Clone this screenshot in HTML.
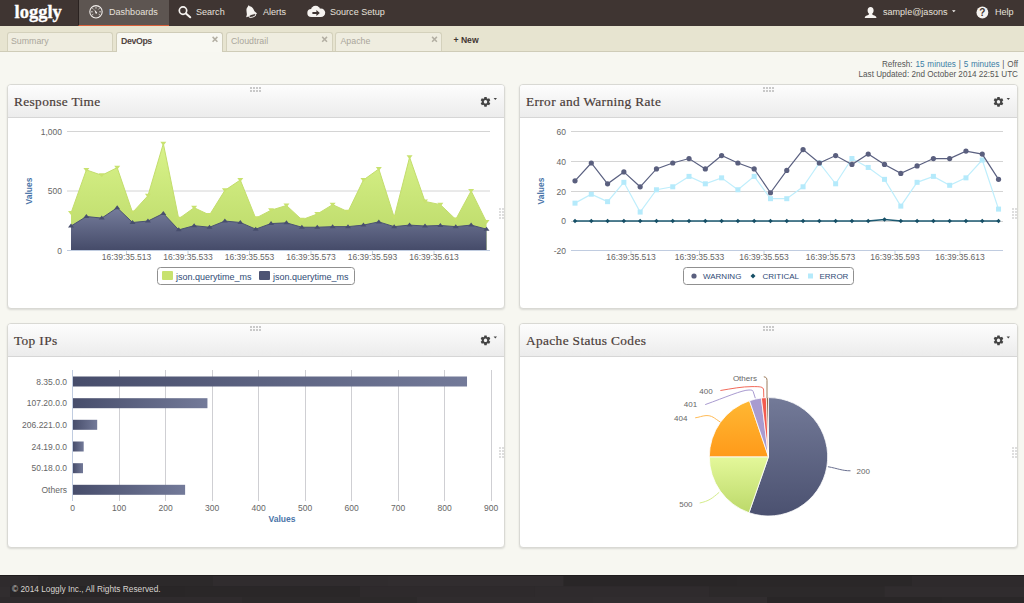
<!DOCTYPE html>
<html><head><meta charset="utf-8"><title>Loggly</title>
<style>
*{box-sizing:border-box;margin:0;padding:0}
html,body{width:1024px;height:603px;overflow:hidden}
body{background:#f7f7f1;font-family:"Liberation Sans",sans-serif;position:relative;color:#444}
#nav{position:absolute;left:0;top:0;width:1024px;height:26px;background:#3f3532}
#logo{position:absolute;left:14.5px;top:2px;font-family:"Liberation Serif",serif;font-weight:bold;font-size:18.5px;color:#fff;letter-spacing:0;-webkit-text-stroke:0.35px #fff}
.navact{position:absolute;left:78px;top:0;width:91px;height:26px;background:#5d5551;border-bottom:1px solid #d9603a;border-left:1px solid #2a2220}
.nt{position:absolute;top:6.5px;font-size:9.05px;color:#e6e1dc;white-space:nowrap}
#tabs{position:absolute;left:0;top:26px;width:1024px;height:26px;background:#e7e4d0;border-bottom:1px solid #cfccb8}
.tab{position:absolute;top:6px;height:19px;width:106px;border:1px solid #d4d1bc;border-bottom:none;border-radius:3px 3px 0 0;background:#efede0;font-size:8.8px;color:#aaa69b;padding:3px 0 0 3px}
.tab.act{background:#f8f8f2;color:#50443f;font-weight:bold;height:20px;border-color:#cfccb8}
.tab .x{position:absolute;right:4px;top:2px;font-size:9px;font-weight:bold;color:#b5b1a6}
.panel{position:absolute;width:498px;height:225px;background:#fff;border:1px solid #d9d9d4;border-radius:4px;box-shadow:0 1px 2px rgba(0,0,0,0.12)}
.ph{position:absolute;left:0;top:0;right:0;height:33px;border-bottom:1px solid #d6d6d6;border-radius:3px 3px 0 0;background:linear-gradient(#fdfdfd,#ececec)}
.pt{position:absolute;left:6px;top:8.5px;font-family:"Liberation Serif",serif;font-size:13.35px;color:#4a3c38;white-space:nowrap;letter-spacing:0.36px;-webkit-text-stroke:0.2px #4a3c38}
#foot{position:absolute;left:0;top:575px;width:1024px;height:28px;background:#2b2829}
#foot span{position:absolute;left:12px;top:9px;font-size:7.5px;color:#d8d4d0}
#refresh{position:absolute;right:6px;top:59.5px;text-align:right;font-size:8.15px;line-height:10px;color:#555}
#refresh b{font-weight:normal;color:#3a7ca5}
svg text.ax{font-family:"Liberation Sans",sans-serif;font-size:8.5px;fill:#666}
svg text.ttl{font-family:"Liberation Sans",sans-serif;font-size:8.5px;font-weight:bold;fill:#4a74a8}
svg text.lg{font-family:"Liberation Sans",sans-serif;font-size:9px;fill:#2f4a75}
svg text.pl{font-family:"Liberation Sans",sans-serif;font-size:8px;fill:#666}
</style></head><body>
<div id="nav">
  <div id="logo">loggly</div>
  <div class="navact"></div>
  <div class="nt" style="left:109px">Dashboards</div>
  <div class="nt" style="left:196px">Search</div>
  <div class="nt" style="left:263px">Alerts</div>
  <div class="nt" style="left:330px">Source Setup</div>
  <div class="nt" style="left:883px">sample@jasons</div>
  <div class="nt" style="left:995px">Help</div>
</div>
<div id="tabs">
  <div class="tab" style="left:7px">Summary</div>
  <div class="tab act" style="left:116px;width:107px"><span style="letter-spacing:-0.4px;position:relative;left:1px">DevOps</span></div>
  <div class="tab" style="left:226px;width:107px"><span style="position:relative;left:1px">Cloudtrail</span></div>
  <div class="tab" style="left:335px;width:107px"><span style="position:relative;left:1.5px">Apache</span></div>
  <div style="position:absolute;left:453.5px;top:8.5px;font-size:8.6px;font-weight:bold;color:#3f3632">+ New</div>
</div>
<div id="refresh"><span style="word-spacing:0.6px">Refresh: <b>15 minutes</b> | <b>5 minutes</b> | Off</span><br>Last Updated: 2nd October 2014 22:51 UTC</div>

<div class="panel" style="left:7px;top:84px"><div class="ph"><div class="pt">Response Time</div></div></div>
<div class="panel" style="left:519px;top:84px;width:499px"><div class="ph"><div class="pt">Error and Warning Rate</div></div></div>
<div class="panel" style="left:7px;top:323px"><div class="ph"><div class="pt">Top IPs</div></div></div>
<div class="panel" style="left:519px;top:323px;width:499px"><div class="ph"><div class="pt">Apache Status Codes</div></div></div>

<div id="foot"></div>

<svg id="ov" width="1024" height="603" viewBox="0 0 1024 603" style="position:absolute;left:0;top:0">
<defs>
<linearGradient id="gGreen" x1="0" y1="0" x2="0" y2="1"><stop offset="0" stop-color="#d9f38a"/><stop offset="1" stop-color="#bad867"/></linearGradient>
<linearGradient id="gDark" x1="0" y1="0" x2="0" y2="1"><stop offset="0" stop-color="#767d9c"/><stop offset="1" stop-color="#454b69"/></linearGradient>
<linearGradient id="gBar" x1="0" y1="0" x2="1" y2="0" gradientUnits="objectBoundingBox"><stop offset="0" stop-color="#474d6b"/><stop offset="1" stop-color="#737a99"/></linearGradient>
<linearGradient id="pSlate" x1="0" y1="0" x2="0" y2="1"><stop offset="0" stop-color="#737a98"/><stop offset="1" stop-color="#4b5170"/></linearGradient>
<linearGradient id="pGreen" x1="0" y1="0" x2="0" y2="1"><stop offset="0" stop-color="#e4f89a"/><stop offset="1" stop-color="#bcd96a"/></linearGradient>
<linearGradient id="pOrange" x1="0" y1="0" x2="0" y2="1"><stop offset="0" stop-color="#ffb833"/><stop offset="1" stop-color="#ff9a1a"/></linearGradient>
</defs>
<g id="rt">
<line x1="67" x2="490" y1="131.5" y2="131.5" stroke="#d4d4d4" stroke-width="1"/>
<line x1="67" x2="490" y1="191" y2="191" stroke="#d4d4d4" stroke-width="1"/>
<line x1="67" x2="490" y1="250.5" y2="250.5" stroke="#d4d4d4" stroke-width="1"/>
<path d="M71,250.3 L71,213.08 L86.39,169.92 L101.78,175.27 L117.17,167.66 L132.56,212.49 L147.95,195.72 L163.34,143.65 L178.73,218.79 L194.12,207.73 L209.51,214.99 L224.9,190.37 L240.29,180.03 L255.68,218.2 L271.07,210.23 L286.46,205.47 L301.85,219.74 L317.24,214.04 L332.63,204.64 L348.02,211.78 L363.41,180.03 L378.8,168.97 L394.19,217.25 L409.58,157.32 L424.97,201.43 L440.36,204.64 L455.75,219.39 L471.14,190.97 L486.53,222 L486.53,250.3 Z" fill="url(#gGreen)"/>
<path d="M71,213.08 L86.39,169.92 L101.78,175.27 L117.17,167.66 L132.56,212.49 L147.95,195.72 L163.34,143.65 L178.73,218.79 L194.12,207.73 L209.51,214.99 L224.9,190.37 L240.29,180.03 L255.68,218.2 L271.07,210.23 L286.46,205.47 L301.85,219.74 L317.24,214.04 L332.63,204.64 L348.02,211.78 L363.41,180.03 L378.8,168.97 L394.19,217.25 L409.58,157.32 L424.97,201.43 L440.36,204.64 L455.75,219.39 L471.14,190.97 L486.53,222" fill="none" stroke="#c3dd6c" stroke-width="1"/>
<path d="M71,211.08 l3,0 l-3,4 l-3,-4z" fill="#c8e26f"/>
<path d="M86.39,167.92 l3,0 l-3,4 l-3,-4z" fill="#c8e26f"/>
<path d="M101.78,173.27 l3,0 l-3,4 l-3,-4z" fill="#c8e26f"/>
<path d="M117.17,165.66 l3,0 l-3,4 l-3,-4z" fill="#c8e26f"/>
<path d="M132.56,210.49 l3,0 l-3,4 l-3,-4z" fill="#c8e26f"/>
<path d="M147.95,193.72 l3,0 l-3,4 l-3,-4z" fill="#c8e26f"/>
<path d="M163.34,141.65 l3,0 l-3,4 l-3,-4z" fill="#c8e26f"/>
<path d="M178.73,216.79 l3,0 l-3,4 l-3,-4z" fill="#c8e26f"/>
<path d="M194.12,205.73 l3,0 l-3,4 l-3,-4z" fill="#c8e26f"/>
<path d="M209.51,212.99 l3,0 l-3,4 l-3,-4z" fill="#c8e26f"/>
<path d="M224.9,188.37 l3,0 l-3,4 l-3,-4z" fill="#c8e26f"/>
<path d="M240.29,178.03 l3,0 l-3,4 l-3,-4z" fill="#c8e26f"/>
<path d="M255.68,216.2 l3,0 l-3,4 l-3,-4z" fill="#c8e26f"/>
<path d="M271.07,208.23 l3,0 l-3,4 l-3,-4z" fill="#c8e26f"/>
<path d="M286.46,203.47 l3,0 l-3,4 l-3,-4z" fill="#c8e26f"/>
<path d="M301.85,217.74 l3,0 l-3,4 l-3,-4z" fill="#c8e26f"/>
<path d="M317.24,212.04 l3,0 l-3,4 l-3,-4z" fill="#c8e26f"/>
<path d="M332.63,202.64 l3,0 l-3,4 l-3,-4z" fill="#c8e26f"/>
<path d="M348.02,209.78 l3,0 l-3,4 l-3,-4z" fill="#c8e26f"/>
<path d="M363.41,178.03 l3,0 l-3,4 l-3,-4z" fill="#c8e26f"/>
<path d="M378.8,166.97 l3,0 l-3,4 l-3,-4z" fill="#c8e26f"/>
<path d="M394.19,215.25 l3,0 l-3,4 l-3,-4z" fill="#c8e26f"/>
<path d="M409.58,155.32 l3,0 l-3,4 l-3,-4z" fill="#c8e26f"/>
<path d="M424.97,199.43 l3,0 l-3,4 l-3,-4z" fill="#c8e26f"/>
<path d="M440.36,202.64 l3,0 l-3,4 l-3,-4z" fill="#c8e26f"/>
<path d="M455.75,217.39 l3,0 l-3,4 l-3,-4z" fill="#c8e26f"/>
<path d="M471.14,188.97 l3,0 l-3,4 l-3,-4z" fill="#c8e26f"/>
<path d="M486.53,220 l3,0 l-3,4 l-3,-4z" fill="#c8e26f"/>
<path d="M71,250.3 L71,226.04 L86.39,216.53 L101.78,218.08 L117.17,207.73 L132.56,222.48 L147.95,221.05 L163.34,213.44 L178.73,229.85 L194.12,225.69 L209.51,227.23 L224.9,221.05 L240.29,222.48 L255.68,229.14 L271.07,223.55 L286.46,222.83 L301.85,227.23 L317.24,227.23 L332.63,226.64 L348.02,226.64 L363.41,225.09 L378.8,221.88 L394.19,226.64 L409.58,225.09 L424.97,226.04 L440.36,225.45 L455.75,226.64 L471.14,225.09 L486.53,229.14 L486.53,250.3 Z" fill="url(#gDark)"/>
<path d="M71,226.04 L86.39,216.53 L101.78,218.08 L117.17,207.73 L132.56,222.48 L147.95,221.05 L163.34,213.44 L178.73,229.85 L194.12,225.69 L209.51,227.23 L224.9,221.05 L240.29,222.48 L255.68,229.14 L271.07,223.55 L286.46,222.83 L301.85,227.23 L317.24,227.23 L332.63,226.64 L348.02,226.64 L363.41,225.09 L378.8,221.88 L394.19,226.64 L409.58,225.09 L424.97,226.04 L440.36,225.45 L455.75,226.64 L471.14,225.09 L486.53,229.14" fill="none" stroke="#4a5272" stroke-width="1"/>
<path d="M71,223.54 l3,4 l-6,0z" fill="#484f6e"/>
<path d="M86.39,214.03 l3,4 l-6,0z" fill="#484f6e"/>
<path d="M101.78,215.58 l3,4 l-6,0z" fill="#484f6e"/>
<path d="M117.17,205.23 l3,4 l-6,0z" fill="#484f6e"/>
<path d="M132.56,219.98 l3,4 l-6,0z" fill="#484f6e"/>
<path d="M147.95,218.55 l3,4 l-6,0z" fill="#484f6e"/>
<path d="M163.34,210.94 l3,4 l-6,0z" fill="#484f6e"/>
<path d="M178.73,227.35 l3,4 l-6,0z" fill="#484f6e"/>
<path d="M194.12,223.19 l3,4 l-6,0z" fill="#484f6e"/>
<path d="M209.51,224.73 l3,4 l-6,0z" fill="#484f6e"/>
<path d="M224.9,218.55 l3,4 l-6,0z" fill="#484f6e"/>
<path d="M240.29,219.98 l3,4 l-6,0z" fill="#484f6e"/>
<path d="M255.68,226.64 l3,4 l-6,0z" fill="#484f6e"/>
<path d="M271.07,221.05 l3,4 l-6,0z" fill="#484f6e"/>
<path d="M286.46,220.33 l3,4 l-6,0z" fill="#484f6e"/>
<path d="M301.85,224.73 l3,4 l-6,0z" fill="#484f6e"/>
<path d="M317.24,224.73 l3,4 l-6,0z" fill="#484f6e"/>
<path d="M332.63,224.14 l3,4 l-6,0z" fill="#484f6e"/>
<path d="M348.02,224.14 l3,4 l-6,0z" fill="#484f6e"/>
<path d="M363.41,222.59 l3,4 l-6,0z" fill="#484f6e"/>
<path d="M378.8,219.38 l3,4 l-6,0z" fill="#484f6e"/>
<path d="M394.19,224.14 l3,4 l-6,0z" fill="#484f6e"/>
<path d="M409.58,222.59 l3,4 l-6,0z" fill="#484f6e"/>
<path d="M424.97,223.54 l3,4 l-6,0z" fill="#484f6e"/>
<path d="M440.36,222.95 l3,4 l-6,0z" fill="#484f6e"/>
<path d="M455.75,224.14 l3,4 l-6,0z" fill="#484f6e"/>
<path d="M471.14,222.59 l3,4 l-6,0z" fill="#484f6e"/>
<path d="M486.53,226.64 l3,4 l-6,0z" fill="#484f6e"/>
<line x1="67" x2="490" y1="250.5" y2="250.5" stroke="#c0cce0" stroke-width="1"/>
<line x1="126.5" x2="126.5" y1="250" y2="254" stroke="#c0d0e0" stroke-width="1"/>
<text x="126.5" y="260" text-anchor="middle" class="ax">16:39:35.513</text>
<line x1="188" x2="188" y1="250" y2="254" stroke="#c0d0e0" stroke-width="1"/>
<text x="188" y="260" text-anchor="middle" class="ax">16:39:35.533</text>
<line x1="249.5" x2="249.5" y1="250" y2="254" stroke="#c0d0e0" stroke-width="1"/>
<text x="249.5" y="260" text-anchor="middle" class="ax">16:39:35.553</text>
<line x1="311" x2="311" y1="250" y2="254" stroke="#c0d0e0" stroke-width="1"/>
<text x="311" y="260" text-anchor="middle" class="ax">16:39:35.573</text>
<line x1="372.5" x2="372.5" y1="250" y2="254" stroke="#c0d0e0" stroke-width="1"/>
<text x="372.5" y="260" text-anchor="middle" class="ax">16:39:35.593</text>
<line x1="434" x2="434" y1="250" y2="254" stroke="#c0d0e0" stroke-width="1"/>
<text x="434" y="260" text-anchor="middle" class="ax">16:39:35.613</text>
<text x="62" y="134.5" text-anchor="end" class="ax">1,000</text>
<text x="62" y="194" text-anchor="end" class="ax">500</text>
<text x="62" y="253.5" text-anchor="end" class="ax">0</text>
<text transform="translate(32,191) rotate(-90)" text-anchor="middle" class="ttl">Values</text>
<rect x="157.5" y="267.5" width="197" height="17" rx="3" ry="3" fill="#fff" stroke="#909090" stroke-width="1"/>
<rect x="162" y="271" width="11" height="9" rx="1" fill="#c8e26f"/>
<text x="176" y="279.5" class="lg">json.querytime_ms</text>
<rect x="259" y="271" width="11" height="9" rx="1" fill="#4d5474"/>
<text x="273" y="279.5" class="lg">json.querytime_ms</text>
</g>
<g id="ew">
<line x1="571" x2="1003" y1="131.5" y2="131.5" stroke="#d4d4d4" stroke-width="1"/>
<line x1="571" x2="1003" y1="161.5" y2="161.5" stroke="#d4d4d4" stroke-width="1"/>
<line x1="571" x2="1003" y1="191.5" y2="191.5" stroke="#d4d4d4" stroke-width="1"/>
<line x1="571" x2="1003" y1="221.5" y2="221.5" stroke="#d4d4d4" stroke-width="1"/>
<line x1="571" x2="1003" y1="250.5" y2="250.5" stroke="#c0cce0" stroke-width="1"/>
<path d="M575,203.15 L591.29,194.22 L607.58,201.66 L623.87,182.32 L640.16,212.07 L656.45,189.76 L672.74,186.79 L689.03,176.38 L705.32,183.81 L721.61,177.86 L737.9,189.76 L754.19,176.38 L770.48,198.69 L786.77,198.69 L803.06,186.79 L819.35,162.99 L835.64,183.81 L851.93,158.53 L868.22,167.45 L884.51,179.35 L900.8,206.12 L917.09,182.32 L933.38,176.38 L949.67,185.3 L965.96,177.86 L982.25,160.01 L998.54,209.1" fill="none" stroke="#bfeefc" stroke-width="1.2"/>
<rect x="572.5" y="200.65" width="5" height="5" fill="#b5eafb"/>
<rect x="588.79" y="191.72" width="5" height="5" fill="#b5eafb"/>
<rect x="605.08" y="199.16" width="5" height="5" fill="#b5eafb"/>
<rect x="621.37" y="179.82" width="5" height="5" fill="#b5eafb"/>
<rect x="637.66" y="209.57" width="5" height="5" fill="#b5eafb"/>
<rect x="653.95" y="187.26" width="5" height="5" fill="#b5eafb"/>
<rect x="670.24" y="184.29" width="5" height="5" fill="#b5eafb"/>
<rect x="686.53" y="173.88" width="5" height="5" fill="#b5eafb"/>
<rect x="702.82" y="181.31" width="5" height="5" fill="#b5eafb"/>
<rect x="719.11" y="175.36" width="5" height="5" fill="#b5eafb"/>
<rect x="735.4" y="187.26" width="5" height="5" fill="#b5eafb"/>
<rect x="751.69" y="173.88" width="5" height="5" fill="#b5eafb"/>
<rect x="767.98" y="196.19" width="5" height="5" fill="#b5eafb"/>
<rect x="784.27" y="196.19" width="5" height="5" fill="#b5eafb"/>
<rect x="800.56" y="184.29" width="5" height="5" fill="#b5eafb"/>
<rect x="816.85" y="160.49" width="5" height="5" fill="#b5eafb"/>
<rect x="833.14" y="181.31" width="5" height="5" fill="#b5eafb"/>
<rect x="849.43" y="156.03" width="5" height="5" fill="#b5eafb"/>
<rect x="865.72" y="164.95" width="5" height="5" fill="#b5eafb"/>
<rect x="882.01" y="176.85" width="5" height="5" fill="#b5eafb"/>
<rect x="898.3" y="203.62" width="5" height="5" fill="#b5eafb"/>
<rect x="914.59" y="179.82" width="5" height="5" fill="#b5eafb"/>
<rect x="930.88" y="173.88" width="5" height="5" fill="#b5eafb"/>
<rect x="947.17" y="182.8" width="5" height="5" fill="#b5eafb"/>
<rect x="963.46" y="175.36" width="5" height="5" fill="#b5eafb"/>
<rect x="979.75" y="157.51" width="5" height="5" fill="#b5eafb"/>
<rect x="996.04" y="206.6" width="5" height="5" fill="#b5eafb"/>
<path d="M575,180.84 L591.29,162.99 L607.58,183.81 L623.87,171.91 L640.16,186.79 L656.45,168.94 L672.74,162.99 L689.03,158.53 L705.32,168.94 L721.61,155.55 L737.9,162.99 L754.19,168.94 L770.48,192.74 L786.77,170.43 L803.06,149.6 L819.35,162.99 L835.64,155.55 L851.93,164.47 L868.22,154.06 L884.51,164.47 L900.8,173.4 L917.09,165.96 L933.38,158.53 L949.67,158.53 L965.96,151.09 L982.25,154.06 L998.54,179.35" fill="none" stroke="#5a6080" stroke-width="1.2"/>
<circle cx="575" cy="180.84" r="2.6" fill="#5a5f7e"/>
<circle cx="591.29" cy="162.99" r="2.6" fill="#5a5f7e"/>
<circle cx="607.58" cy="183.81" r="2.6" fill="#5a5f7e"/>
<circle cx="623.87" cy="171.91" r="2.6" fill="#5a5f7e"/>
<circle cx="640.16" cy="186.79" r="2.6" fill="#5a5f7e"/>
<circle cx="656.45" cy="168.94" r="2.6" fill="#5a5f7e"/>
<circle cx="672.74" cy="162.99" r="2.6" fill="#5a5f7e"/>
<circle cx="689.03" cy="158.53" r="2.6" fill="#5a5f7e"/>
<circle cx="705.32" cy="168.94" r="2.6" fill="#5a5f7e"/>
<circle cx="721.61" cy="155.55" r="2.6" fill="#5a5f7e"/>
<circle cx="737.9" cy="162.99" r="2.6" fill="#5a5f7e"/>
<circle cx="754.19" cy="168.94" r="2.6" fill="#5a5f7e"/>
<circle cx="770.48" cy="192.74" r="2.6" fill="#5a5f7e"/>
<circle cx="786.77" cy="170.43" r="2.6" fill="#5a5f7e"/>
<circle cx="803.06" cy="149.6" r="2.6" fill="#5a5f7e"/>
<circle cx="819.35" cy="162.99" r="2.6" fill="#5a5f7e"/>
<circle cx="835.64" cy="155.55" r="2.6" fill="#5a5f7e"/>
<circle cx="851.93" cy="164.47" r="2.6" fill="#5a5f7e"/>
<circle cx="868.22" cy="154.06" r="2.6" fill="#5a5f7e"/>
<circle cx="884.51" cy="164.47" r="2.6" fill="#5a5f7e"/>
<circle cx="900.8" cy="173.4" r="2.6" fill="#5a5f7e"/>
<circle cx="917.09" cy="165.96" r="2.6" fill="#5a5f7e"/>
<circle cx="933.38" cy="158.53" r="2.6" fill="#5a5f7e"/>
<circle cx="949.67" cy="158.53" r="2.6" fill="#5a5f7e"/>
<circle cx="965.96" cy="151.09" r="2.6" fill="#5a5f7e"/>
<circle cx="982.25" cy="154.06" r="2.6" fill="#5a5f7e"/>
<circle cx="998.54" cy="179.35" r="2.6" fill="#5a5f7e"/>
<path d="M575,221 L591.29,221 L607.58,221 L623.87,221 L640.16,221 L656.45,221 L672.74,221 L689.03,221 L705.32,221 L721.61,221 L737.9,221 L754.19,221 L770.48,221 L786.77,221 L803.06,221 L819.35,221 L835.64,221 L851.93,221 L868.22,221 L884.51,219.51 L900.8,221 L917.09,221 L933.38,221 L949.67,221 L965.96,221 L982.25,221 L998.54,221" fill="none" stroke="#1c5a72" stroke-width="1.3"/>
<path d="M575,218.8 l2.2,2.2 l-2.2,2.2 l-2.2,-2.2z" fill="#164f66"/>
<path d="M591.29,218.8 l2.2,2.2 l-2.2,2.2 l-2.2,-2.2z" fill="#164f66"/>
<path d="M607.58,218.8 l2.2,2.2 l-2.2,2.2 l-2.2,-2.2z" fill="#164f66"/>
<path d="M623.87,218.8 l2.2,2.2 l-2.2,2.2 l-2.2,-2.2z" fill="#164f66"/>
<path d="M640.16,218.8 l2.2,2.2 l-2.2,2.2 l-2.2,-2.2z" fill="#164f66"/>
<path d="M656.45,218.8 l2.2,2.2 l-2.2,2.2 l-2.2,-2.2z" fill="#164f66"/>
<path d="M672.74,218.8 l2.2,2.2 l-2.2,2.2 l-2.2,-2.2z" fill="#164f66"/>
<path d="M689.03,218.8 l2.2,2.2 l-2.2,2.2 l-2.2,-2.2z" fill="#164f66"/>
<path d="M705.32,218.8 l2.2,2.2 l-2.2,2.2 l-2.2,-2.2z" fill="#164f66"/>
<path d="M721.61,218.8 l2.2,2.2 l-2.2,2.2 l-2.2,-2.2z" fill="#164f66"/>
<path d="M737.9,218.8 l2.2,2.2 l-2.2,2.2 l-2.2,-2.2z" fill="#164f66"/>
<path d="M754.19,218.8 l2.2,2.2 l-2.2,2.2 l-2.2,-2.2z" fill="#164f66"/>
<path d="M770.48,218.8 l2.2,2.2 l-2.2,2.2 l-2.2,-2.2z" fill="#164f66"/>
<path d="M786.77,218.8 l2.2,2.2 l-2.2,2.2 l-2.2,-2.2z" fill="#164f66"/>
<path d="M803.06,218.8 l2.2,2.2 l-2.2,2.2 l-2.2,-2.2z" fill="#164f66"/>
<path d="M819.35,218.8 l2.2,2.2 l-2.2,2.2 l-2.2,-2.2z" fill="#164f66"/>
<path d="M835.64,218.8 l2.2,2.2 l-2.2,2.2 l-2.2,-2.2z" fill="#164f66"/>
<path d="M851.93,218.8 l2.2,2.2 l-2.2,2.2 l-2.2,-2.2z" fill="#164f66"/>
<path d="M868.22,218.8 l2.2,2.2 l-2.2,2.2 l-2.2,-2.2z" fill="#164f66"/>
<path d="M884.51,217.31 l2.2,2.2 l-2.2,2.2 l-2.2,-2.2z" fill="#164f66"/>
<path d="M900.8,218.8 l2.2,2.2 l-2.2,2.2 l-2.2,-2.2z" fill="#164f66"/>
<path d="M917.09,218.8 l2.2,2.2 l-2.2,2.2 l-2.2,-2.2z" fill="#164f66"/>
<path d="M933.38,218.8 l2.2,2.2 l-2.2,2.2 l-2.2,-2.2z" fill="#164f66"/>
<path d="M949.67,218.8 l2.2,2.2 l-2.2,2.2 l-2.2,-2.2z" fill="#164f66"/>
<path d="M965.96,218.8 l2.2,2.2 l-2.2,2.2 l-2.2,-2.2z" fill="#164f66"/>
<path d="M982.25,218.8 l2.2,2.2 l-2.2,2.2 l-2.2,-2.2z" fill="#164f66"/>
<path d="M998.54,218.8 l2.2,2.2 l-2.2,2.2 l-2.2,-2.2z" fill="#164f66"/>
<line x1="631" x2="631" y1="250" y2="254" stroke="#c0d0e0" stroke-width="1"/>
<text x="631" y="260" text-anchor="middle" class="ax">16:39:35.513</text>
<line x1="699.5" x2="699.5" y1="250" y2="254" stroke="#c0d0e0" stroke-width="1"/>
<text x="699.5" y="260" text-anchor="middle" class="ax">16:39:35.533</text>
<line x1="764" x2="764" y1="250" y2="254" stroke="#c0d0e0" stroke-width="1"/>
<text x="764" y="260" text-anchor="middle" class="ax">16:39:35.553</text>
<line x1="830.5" x2="830.5" y1="250" y2="254" stroke="#c0d0e0" stroke-width="1"/>
<text x="830.5" y="260" text-anchor="middle" class="ax">16:39:35.573</text>
<line x1="895" x2="895" y1="250" y2="254" stroke="#c0d0e0" stroke-width="1"/>
<text x="895" y="260" text-anchor="middle" class="ax">16:39:35.593</text>
<line x1="960" x2="960" y1="250" y2="254" stroke="#c0d0e0" stroke-width="1"/>
<text x="960" y="260" text-anchor="middle" class="ax">16:39:35.613</text>
<text x="566" y="134.5" text-anchor="end" class="ax">60</text>
<text x="566" y="164.5" text-anchor="end" class="ax">40</text>
<text x="566" y="194.5" text-anchor="end" class="ax">20</text>
<text x="566" y="224" text-anchor="end" class="ax">0</text>
<text x="566" y="253.5" text-anchor="end" class="ax">-20</text>
<text transform="translate(544,191) rotate(-90)" text-anchor="middle" class="ttl">Values</text>
<rect x="683.5" y="267.5" width="170" height="17" rx="3" ry="3" fill="#fff" stroke="#909090" stroke-width="1"/>
<circle cx="694" cy="276" r="2.6" fill="#5a5f7e"/>
<text x="703" y="279.3" class="lg" style="font-size:8px">WARNING</text>
<path d="M753,273.5 l2.5,2.5 l-2.5,2.5 l-2.5,-2.5z" fill="#164f66"/>
<text x="762.5" y="279.3" class="lg" style="font-size:8px">CRITICAL</text>
<rect x="808" y="273.5" width="5" height="5" fill="#b5eafb"/>
<text x="819.5" y="279.3" class="lg" style="font-size:8px">ERROR</text>
</g>
<g id="tb">
<line x1="119.5" x2="119.5" y1="370" y2="501" stroke="#cfcfd3" stroke-width="1"/>
<line x1="165.5" x2="165.5" y1="370" y2="501" stroke="#cfcfd3" stroke-width="1"/>
<line x1="212.5" x2="212.5" y1="370" y2="501" stroke="#cfcfd3" stroke-width="1"/>
<line x1="258.5" x2="258.5" y1="370" y2="501" stroke="#cfcfd3" stroke-width="1"/>
<line x1="305.5" x2="305.5" y1="370" y2="501" stroke="#cfcfd3" stroke-width="1"/>
<line x1="351.5" x2="351.5" y1="370" y2="501" stroke="#cfcfd3" stroke-width="1"/>
<line x1="398.5" x2="398.5" y1="370" y2="501" stroke="#cfcfd3" stroke-width="1"/>
<line x1="444.5" x2="444.5" y1="370" y2="501" stroke="#cfcfd3" stroke-width="1"/>
<line x1="491.5" x2="491.5" y1="370" y2="501" stroke="#cfcfd3" stroke-width="1"/>
<line x1="72.5" x2="72.5" y1="370" y2="501" stroke="#c0cce0" stroke-width="1"/>
<text x="72.5" y="510.5" text-anchor="middle" class="ax">0</text>
<text x="119.02" y="510.5" text-anchor="middle" class="ax">100</text>
<text x="165.54" y="510.5" text-anchor="middle" class="ax">200</text>
<text x="212.06" y="510.5" text-anchor="middle" class="ax">300</text>
<text x="258.58" y="510.5" text-anchor="middle" class="ax">400</text>
<text x="305.1" y="510.5" text-anchor="middle" class="ax">500</text>
<text x="351.62" y="510.5" text-anchor="middle" class="ax">600</text>
<text x="398.14" y="510.5" text-anchor="middle" class="ax">700</text>
<text x="444.66" y="510.5" text-anchor="middle" class="ax">800</text>
<text x="491.18" y="510.5" text-anchor="middle" class="ax">900</text>
<rect x="73" y="376.5" width="394.02" height="10" fill="url(#gBar)"/>
<text x="67" y="384.5" text-anchor="end" class="ax">8.35.0.0</text>
<rect x="73" y="398.2" width="134.44" height="10" fill="url(#gBar)"/>
<text x="67" y="406.2" text-anchor="end" class="ax">107.20.0.0</text>
<rect x="73" y="419.8" width="24.19" height="10" fill="url(#gBar)"/>
<text x="67" y="427.8" text-anchor="end" class="ax">206.221.0.0</text>
<rect x="73" y="441.5" width="10.7" height="10" fill="url(#gBar)"/>
<text x="67" y="449.5" text-anchor="end" class="ax">24.19.0.0</text>
<rect x="73" y="463.2" width="10" height="10" fill="url(#gBar)"/>
<text x="67" y="471.2" text-anchor="end" class="ax">50.18.0.0</text>
<rect x="73" y="484.8" width="112.11" height="10" fill="url(#gBar)"/>
<text x="67" y="492.8" text-anchor="end" class="ax">Others</text>
<text x="282" y="521.5" text-anchor="middle" class="ttl">Values</text>
</g>
<g id="pie">
<path d="M768.5,456.8 L768.5,397.6 A59.2,59.2 0 1 1 749.03,512.71 Z" fill="url(#pSlate)" stroke="#fff" stroke-width="0.8" stroke-linejoin="round"/>
<path d="M768.5,456.8 L749.03,512.71 A59.2,59.2 0 0 1 709.3,456.8 Z" fill="url(#pGreen)" stroke="#fff" stroke-width="0.8" stroke-linejoin="round"/>
<path d="M768.5,456.8 L709.3,456.8 A59.2,59.2 0 0 1 749.52,400.73 Z" fill="url(#pOrange)" stroke="#fff" stroke-width="0.8" stroke-linejoin="round"/>
<path d="M768.5,456.8 L749.52,400.73 A59.2,59.2 0 0 1 761.39,398.03 Z" fill="#a99bd0" stroke="#fff" stroke-width="0.8" stroke-linejoin="round"/>
<path d="M768.5,456.8 L761.39,398.03 A59.2,59.2 0 0 1 766.33,397.64 Z" fill="#f25a4e" stroke="#fff" stroke-width="0.8" stroke-linejoin="round"/>
<path d="M768.5,456.8 L766.33,397.64 A59.2,59.2 0 0 1 768.5,397.6 Z" fill="#8a6a4a" stroke="#fff" stroke-width="0.8" stroke-linejoin="round"/>

<g fill="none" stroke-width="1">
<path d="M827.9,466.7 C838,468.5 842,470.8 850.5,470.8" stroke="#6a7090"/>
<path d="M719.2,492.3 C712,498.5 709,501 699.7,503" stroke="#d4ec8a"/>
<path d="M720.4,422.1 C714,418 712,415.3 706,415.6 C702,415.8 699,417.4 695.2,417.8" stroke="#ffbb55"/>
<path d="M755.3,398.2 L753.2,391.6 C752.8,390.2 752,390 749,390 C742,390 725,397.5 705.2,404.6" stroke="#a99bd0"/>
<path d="M763.8,397.4 L763.6,390 C763.4,386.6 760,386.6 752,386.6 C742,386.6 732,388.6 720.4,390.5" stroke="#f26a5a"/>
<path d="M767,397.9 L767,380.5 C767,378 766,377 763.8,376.8" stroke="#9a7a5a"/>
</g>
<text x="856.5" y="473.8" class="pl">200</text>
<text x="679.2" y="506.7" class="pl">500</text>
<text x="674.1" y="420.6" class="pl">404</text>
<text x="683.8" y="407" class="pl">401</text>
<text x="699.3" y="394" class="pl">400</text>
<text x="732.9" y="380.6" class="pl">Others</text>
</g>

<g stroke="#b3afa3" stroke-width="1.5" stroke-linecap="butt"><path d="M212.6,36.9 l4.8,4.8 M217.4,36.9 l-4.8,4.8"/><path d="M322.20000000000005,36.9 l4.8,4.8 M327.0,36.9 l-4.8,4.8"/><path d="M432.1,36.9 l4.8,4.8 M436.9,36.9 l-4.8,4.8"/></g>
<g id="icons">
<!-- dashboard gauge -->
<circle cx="96" cy="11.8" r="6.2" fill="none" stroke="#f3efec" stroke-width="1.1"/>
<g stroke="#f3efec" stroke-width="0.8" stroke-linecap="round">
<line x1="96" y1="7.2" x2="96" y2="8.3"/><line x1="92.7" y1="8.5" x2="93.4" y2="9.2"/><line x1="99.3" y1="8.5" x2="98.6" y2="9.2"/>
<line x1="91.4" y1="11.8" x2="92.4" y2="11.8"/><line x1="100.6" y1="11.8" x2="99.6" y2="11.8"/>
<line x1="92.3" y1="14.9" x2="93" y2="14.4"/><line x1="99.7" y1="14.9" x2="99" y2="14.4"/>
</g>
<path d="M94.3,9.4 L97.2,12.6 A1.1,1.1 0 0 1 95.6,13.6 Z" fill="#f3efec"/>
<!-- search -->
<circle cx="183" cy="10.6" r="3.7" fill="none" stroke="#f6f3f0" stroke-width="1.7"/>
<line x1="185.9" y1="13.5" x2="190.2" y2="17.2" stroke="#f6f3f0" stroke-width="2.1" stroke-linecap="round"/>
<!-- bell -->
<g transform="translate(250.5,11.8) rotate(-18)">
<path d="M-0.9,-5.6 a0.9,0.9 0 0 1 1.8,0 C4,-4.6 3.6,-0.2 4.3,1.4 C4.8,2.6 5.6,3 5.6,3.8 L-5.6,3.8 C-5.6,3 -4.8,2.6 -4.3,1.4 C-3.6,-0.2 -4,-4.6 -0.9,-5.6 Z" fill="#f6f3f0"/>
<ellipse cx="0.6" cy="4.2" rx="3.6" ry="1.5" fill="#3f3532" stroke="#f6f3f0" stroke-width="0.9"/>
</g>
<!-- cloud -->
<g fill="#f6f3f0"><circle cx="311.3" cy="13" r="4"/><circle cx="315.6" cy="10.6" r="4.8"/><circle cx="320.9" cy="12.7" r="4.3"/><rect x="311.3" y="12" width="9.6" height="5"/></g>
<path d="M312.4,11.9 h4 v-2 l3.4,3 l-3.4,3 v-2 h-4 z" fill="#3f3532"/>
<!-- user -->
<path d="M870.6,7 c1.9,0 3,1.5 3,3.4 c0,1.5 -0.7,2.7 -1.5,3.3 c0.1,1 1,1.3 2.3,1.8 c1.4,0.5 2,1.1 2,2.5 L864.8,18 c0,-1.4 0.6,-2 2,-2.5 c1.3,-0.5 2.2,-0.8 2.3,-1.8 c-0.8,-0.6 -1.5,-1.8 -1.5,-3.3 c0,-1.9 1.1,-3.4 3,-3.4 z" fill="#f6f3f0"/>
<!-- caret -->
<path d="M952,10.2 h3.6 l-1.8,2 z" fill="#f6f3f0"/>
<!-- help -->
<circle cx="982.4" cy="12.5" r="5.9" fill="#f6f3f0"/>
<text x="982.4" y="16" text-anchor="middle" style="font-family:'Liberation Sans',sans-serif;font-weight:bold;font-size:10px;fill:#3f3532">?</text>
</g>
<!-- gears, handles -->
<defs>
<g id="gear">
<path fill="#444" fill-rule="evenodd" d="M-1.15,-4.9 L1.15,-4.9 L1.45,-3.35 L2.35,-2.95 L3.65,-3.45 L4.8,-1.45 L3.65,-0.4 L3.65,0.4 L4.8,1.45 L3.65,3.45 L2.35,2.95 L1.45,3.35 L1.15,4.9 L-1.15,4.9 L-1.45,3.35 L-2.35,2.95 L-3.65,3.45 L-4.8,1.45 L-3.65,0.4 L-3.65,-0.4 L-4.8,-1.45 L-3.65,-3.45 L-2.35,-2.95 L-1.45,-3.35 Z M0,-1.7 A1.7,1.7 0 1 0 0.001,-1.7 Z"/>
<path d="M8.1,-3.9 h3.4 l-1.7,2 z" fill="#444"/>
</g>
<g id="hh" fill="#c9c9c9">
<rect x="0" y="0" width="2" height="2"/><rect x="3" y="0" width="2" height="2"/><rect x="6" y="0" width="2" height="2"/><rect x="9" y="0" width="2" height="2"/>
<rect x="0" y="3" width="2" height="2"/><rect x="3" y="3" width="2" height="2"/><rect x="6" y="3" width="2" height="2"/><rect x="9" y="3" width="2" height="2"/>
</g>
<g id="vh" fill="#dedede">
<rect x="0" y="0" width="2" height="2"/><rect x="3" y="0" width="2" height="2"/>
<rect x="0" y="3" width="2" height="2"/><rect x="3" y="3" width="2" height="2"/>
<rect x="0" y="6" width="2" height="2"/><rect x="3" y="6" width="2" height="2"/>
<rect x="0" y="9" width="2" height="2"/><rect x="3" y="9" width="2" height="2"/>
</g>
</defs>
<use href="#gear" x="485.5" y="101.8"/><use href="#gear" x="998.5" y="101.8"/>
<use href="#gear" x="485.5" y="340.3"/><use href="#gear" x="998.5" y="340.3"/>
<use href="#hh" x="250" y="87"/><use href="#hh" x="763" y="87"/>
<use href="#hh" x="250" y="326"/><use href="#hh" x="763" y="326"/>
<use href="#vh" x="499" y="208"/><use href="#vh" x="1012" y="208"/>
<use href="#vh" x="499" y="447"/><use href="#vh" x="1012" y="447"/>
<!-- footer planks -->
<g id="planks">
<rect x="0" y="576" width="38" height="10.2" fill="#2f2b2d"/>
<rect x="38" y="576" width="175" height="10.2" fill="#2c292a"/>
<rect x="213" y="576" width="175" height="10.2" fill="#302c2e"/>
<rect x="388" y="576" width="175.7" height="10.2" fill="#312d2f"/>
<rect x="563.7" y="576" width="173.3" height="10.2" fill="#292627"/>
<rect x="737" y="576" width="175" height="10.2" fill="#2a2728"/>
<rect x="912" y="576" width="112" height="10.2" fill="#2e2a2c"/>
<rect x="0" y="586.2" width="10" height="10.8" fill="#312d2f"/>
<rect x="10" y="586.2" width="175" height="10.8" fill="#292627"/>
<rect x="185" y="586.2" width="175" height="10.8" fill="#2a2728"/>
<rect x="360" y="586.2" width="174.5" height="10.8" fill="#2e2a2c"/>
<rect x="534.5" y="586.2" width="175.0" height="10.8" fill="#2f2b2d"/>
<rect x="709.5" y="586.2" width="175.0" height="10.8" fill="#2c292a"/>
<rect x="884.5" y="586.2" width="139.5" height="10.8" fill="#302c2e"/>
<rect x="0" y="597" width="67" height="6" fill="#2e2a2c"/>
<rect x="67" y="597" width="175" height="6" fill="#2f2b2d"/>
<rect x="242" y="597" width="175" height="6" fill="#2c292a"/>
<rect x="417" y="597" width="176" height="6" fill="#302c2e"/>
<rect x="593" y="597" width="174" height="6" fill="#312d2f"/>
<rect x="767" y="597" width="175" height="6" fill="#292627"/>
<rect x="942" y="597" width="82" height="6" fill="#2a2728"/>
<rect x="0" y="575" width="1024" height="1" fill="#1f1c1d"/>
</g>
<text x="12" y="591.5" style="font-family:'Liberation Sans',sans-serif;font-size:8.3px;fill:#d8d4d0">&#169; 2014 Loggly Inc., All Rights Reserved.</text>

</svg>
</body></html>
